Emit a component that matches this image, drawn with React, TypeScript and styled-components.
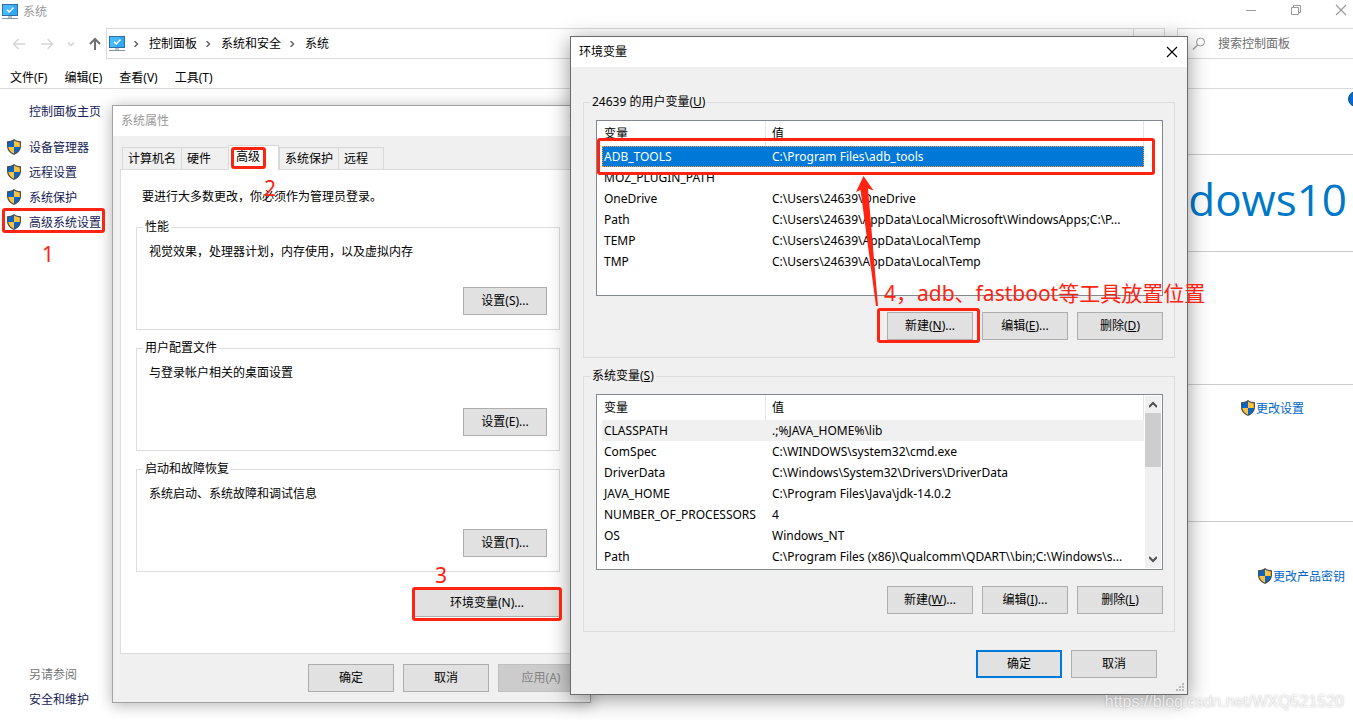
import React from "react";
import styled, { createGlobalStyle, css } from "styled-components";

const FONT = '"Noto Sans", "Noto Sans CJK SC", sans-serif';
const RED = "#ff2312";

const GlobalStyle = createGlobalStyle`
  *, *::before, *::after { box-sizing: border-box; }
  html, body { margin: 0; padding: 0; }
  body { font: 12px/16px ${FONT}; color: #000; background: #fff; overflow: hidden; }
  button, input { font: inherit; color: inherit; margin: 0; }
  svg { display: block; flex: none; }
`;

/* ---------- icons ---------- */

const MonitorIcon = () => (
  <svg width="16" height="16" viewBox="0 0 16 16" aria-hidden="true">
    <rect x="0" y="0" width="16" height="12" fill="#2f6f9f" />
    <rect x="1" y="1" width="14" height="10" fill="#2fa9f8" />
    <path d="M1 1h10L6 11H1z" fill="#47baff" />
    <path d="M5 5.700l2.300 2.300L11.500 3.500" fill="none" stroke="#fff" strokeWidth="1.500" />
    <path d="M6 12h4v2H6z" fill="#b9c4cc" />
    <path d="M0 14.500h16" stroke="#8397a5" />
  </svg>
);

const ShieldIcon = () => (
  <svg width="14" height="16" viewBox="0 0 14 16" aria-hidden="true">
    <path d="M7 0C5 1.600 2.600 2.200 0 2.300V7c0 4.200 2.900 7.300 7 9 4.100-1.700 7-4.800 7-9V2.300C11.400 2.200 9 1.600 7 0z" fill="#4b4f54" />
    <path d="M7 1.500C5.300 2.700 3.200 3.300 1.200 3.400V8H7z" fill="#0a66c4" />
    <path d="M7 1.500c1.700 1.200 3.800 1.800 5.800 1.900V8H7z" fill="#ffc23c" />
    <path d="M1.300 8H7v6.700C3.800 13.200 1.700 11 1.300 8z" fill="#ffc23c" />
    <path d="M12.700 8H7v6.700C10.200 13.200 12.300 11 12.700 8z" fill="#0a66c4" />
  </svg>
);

const ArrowIcon = ({ dir, color }: { dir: "left" | "right" | "up"; color: string }) => {
  const d = {
    left: "M13 7H1.500M6.500 2L1.500 7l5 5",
    right: "M1 7h11.500M7.500 2l5 5-5 5",
    up: "M7 13V2M2 7l5-5 5 5",
  }[dir];
  return (
    <svg width="14" height="14" viewBox="0 0 14 14" aria-hidden="true">
      <path d={d} fill="none" stroke={color} strokeWidth={dir === "up" ? 2 : 1.5} />
    </svg>
  );
};

const Chevron = ({ dir, color, size = 6, w = 1.5 }: { dir: "right" | "down" | "up"; color: string; size?: number; w?: number }) => {
  const d = { right: "M1.500 0l3 3-3 3", down: "M0 1.500l3 3 3-3", up: "M0 4.500l3-3 3 3" }[dir];
  return (
    <svg width={size} height={size} viewBox="0 0 6 6" aria-hidden="true">
      <path d={d} fill="none" stroke={color} strokeWidth={w} />
    </svg>
  );
};

const CloseGlyph = ({ color }: { color: string }) => (
  <svg width="12" height="12" viewBox="0 0 12 12" aria-hidden="true">
    <path d="M1 1l10 10M11 1L1 11" stroke={color} strokeWidth="1.100" />
  </svg>
);

/* ---------- control panel window ---------- */

const Desktop = styled.div`
  position: relative;
  display: flex;
  flex-direction: column;
  min-height: 100vh;
  overflow: hidden;
`;

const TitleBar = styled.header`
  display: flex;
  align-items: center;
  gap: 5px;
  height: 24px;
  padding: 0 6px 0 2px;
  color: #999;
`;

const WindowControls = styled.div`
  display: flex;
  gap: 33px;
  margin-left: auto;
  padding-bottom: 4px;
`;

const IconButton = styled.button`
  display: flex;
  align-items: center;
  justify-content: center;
  min-width: 12px;
  padding: 0;
  border: 0;
  background: none;
`;

const NavRow = styled.nav`
  display: flex;
  align-items: stretch;
  height: 31px;
  margin-top: 4px;
`;

const NavButtons = styled.div`
  display: flex;
  align-items: center;
  gap: 14px;
  width: 106px;
  padding-left: 12px;
`;

const AddressBar = styled.div`
  display: flex;
  flex: 1;
  align-items: center;
  border: 1px solid #d9d9d9;
  padding-left: 2px;
`;

const Crumbs = styled.ol`
  display: flex;
  align-items: center;
  margin: 0;
  padding: 0;
  list-style: none;
`;

const Crumb = styled.li`
  display: flex;
  align-items: center;
  gap: 10px;
  padding-left: 8px;
`;

const AddressDrop = styled.button`
  align-self: stretch;
  width: 31px;
  margin-left: auto;
  border: 0;
  border-left: 1px solid #d9d9d9;
  background: none;
`;

const SearchBox = styled.label`
  display: flex;
  align-items: center;
  gap: 12px;
  width: 176px;
  margin-left: 12px;
  padding-left: 14px;
  border: 1px solid #d9d9d9;
  border-right: 0;
`;

const SearchInput = styled.input`
  width: 100%;
  min-width: 0;
  border: 0;
  padding: 0;
  outline: 0;
  background: none;
  &::placeholder { color: #6d6d6d; opacity: 1; }
`;

const MenuBar = styled.div`
  display: flex;
  align-items: flex-start;
  gap: 17px;
  height: 30px;
  padding: 9px 10px 0;
  border-bottom: 1px solid #d9d9d9;
`;

const MenuItem = styled.button`
  padding: 2px 0;
  border: 0;
  background: none;
`;

const Body = styled.div`
  display: flex;
  flex: 1;
`;

const Sidebar = styled.aside`
  display: flex;
  flex-direction: column;
  width: 180px;
  padding: 14px 0 11px 7px;
`;

const SideList = styled.ul`
  display: flex;
  flex-direction: column;
  gap: 7px;
  margin: 0;
  padding: 0;
  list-style: none;
`;

const SideLink = styled.a<{ $plain?: boolean }>`
  display: flex;
  align-items: flex-start;
  gap: 8px;
  padding-left: ${(p) => (p.$plain ? 22 : 0)}px;
  color: #151c55;
  line-height: 18px;
  text-decoration: none;
`;

const SideHome = styled.div`
  margin-bottom: 18px;
`;

const SeeAlso = styled.div`
  display: flex;
  flex-direction: column;
  gap: 8px;
  margin-top: auto;
`;

const SeeAlsoTitle = styled.span`
  padding-left: 22px;
  color: #777;
`;

const Main = styled.main`
  flex: 1;
`;

const Section = styled.section<{ $h: number; $right: number; $last?: boolean }>`
  display: flex;
  align-items: flex-start;
  justify-content: flex-end;
  height: ${(p) => p.$h}px;
  padding-right: ${(p) => p.$right}px;
  ${(p) => !p.$last && css`border-bottom: 1px solid #ccc;`}
`;

const HelpBadge = styled.button`
  width: 16px;
  height: 16px;
  margin: 2px -11px 0 0;
  border: 1px solid #1b4f80;
  border-radius: 50%;
  padding: 0;
  background: #0069d2;
`;

const Brand = styled.div`
  display: flex;
  padding-top: 12px;
  color: #0078c8;
  font: 400 44px/64px "Open Sans", sans-serif;
`;

const ActionLink = styled.a<{ $top: number }>`
  display: flex;
  align-items: flex-start;
  gap: 1px;
  margin-top: ${(p) => p.$top}px;
  color: #0066cc;
  line-height: 18px;
  text-decoration: none;
`;

/* ---------- shared dialog parts ---------- */

const Dialog = styled.section<{ $x: number; $y: number; $w: number; $active?: boolean }>`
  position: absolute;
  left: ${(p) => p.$x}px;
  top: ${(p) => p.$y}px;
  width: ${(p) => p.$w}px;
  border: 1px solid ${(p) => (p.$active ? "#6b6b6b" : "#a3a3a3")};
  background: #f0f0f0;
  box-shadow: ${(p) => (p.$active ? "0 4px 20px rgba(0,0,0,.42)" : "0 2px 14px rgba(0,0,0,.3)")};
`;

const DialogTitle = styled.header<{ $active?: boolean }>`
  display: flex;
  align-items: center;
  justify-content: space-between;
  height: 30px;
  padding: 0 9px 0 8px;
  background: #fff;
  color: ${(p) => (p.$active ? "#000" : "#999")};
`;

const PushButton = styled.button<{ $w?: number; $primary?: boolean }>`
  width: ${(p) => p.$w ?? 86}px;
  height: 28px;
  padding: 0;
  border: ${(p) => (p.$primary ? "2px solid #0078d7" : "1px solid #adadad")};
  background: #e1e1e1;
  &:disabled { background: #ccc; border-color: #bfbfbf; color: #838383; }
`;

const ButtonRow = styled.div<{ $pad: string }>`
  display: flex;
  justify-content: flex-end;
  gap: 9px;
  padding: ${(p) => p.$pad};
`;

const Group = styled.fieldset<{ $pad: string }>`
  min-width: 0;
  margin: 0 0 10px;
  padding: ${(p) => p.$pad};
  border: 1px solid #dcdcdc;
`;

const Legend = styled.legend`
  margin-left: -6px;
  padding: 0 2px;
`;

/* ---------- system properties ---------- */

const Tabs = styled.div`
  display: flex;
  align-items: flex-end;
  height: 33px;
  padding: 0 9px;
`;

const Tab = styled.button<{ $w: number; $on?: boolean }>`
  width: ${(p) => p.$w}px;
  height: ${(p) => (p.$on ? 25 : 22)}px;
  margin-bottom: ${(p) => (p.$on ? -1 : 0)}px;
  padding: ${(p) => (p.$on ? "0 0 2px 7px" : "0 0 0 5px")};
  border: 1px solid #d9d9d9;
  border-bottom: 0;
  border-right-width: ${(p) => (p.$on ? 1 : 0)}px;
  background: ${(p) => (p.$on ? "#fff" : "#f0f0f0")};
  text-align: left;
  white-space: nowrap;
  &:last-child { border-right-width: 1px; }
`;

const TabPanel = styled.div`
  display: flex;
  flex-direction: column;
  margin: 0 7px;
  padding: 19px 22px 36px 15px;
  border: 1px solid #dcdcdc;
  background: #fff;
`;

const Notice = styled.p`
  margin: 0 0 14px;
  padding-left: 6px;
`;

const GroupBody = styled.div`
  display: flex;
  flex-direction: column;
  gap: 27px;
`;

const EndButton = styled.div`
  display: flex;
  justify-content: flex-end;
`;

const EnvRow = styled(EndButton)`
  padding-top: 7px;
`;

/* ---------- environment variables ---------- */

const EnvBody = styled.div`
  padding: 27px 12px 0;
`;

const ListBox = styled.div`
  display: flex;
  justify-content: space-between;
  height: 176px;
  padding: 0 1px 0 5px;
  border: 1px solid #828790;
  background: #fff;
`;

const VarTable = styled.table`
  width: 542px;
  table-layout: fixed;
  border-collapse: separate;
  border-spacing: 0;
  align-self: flex-start;
`;

const Th = styled.th<{ $w?: number }>`
  width: ${(p) => (p.$w ? p.$w + "px" : "auto")};
  height: 25px;
  padding: 0 0 0 2px;
  border-right: 1px solid #e5e5e5;
  font-weight: 400;
  text-align: left;
  & + & { padding-left: 6px; }
`;

const Td = styled.td`
  height: 21px;
  padding: 0 0 0 2px;
  white-space: nowrap;
  & + & { padding-left: 6px; }
`;

const Row = styled.tr<{ $state?: "selected" | "inactive" }>`
  ${(p) => p.$state === "selected" && css`
    background: #0078d7;
    color: #fff;
    outline: 1px dotted #ff9a3c;
    outline-offset: -1px;
  `}
  ${(p) => p.$state === "inactive" && css`background: #f0f0f0;`}
`;

const ScrollBar = styled.div`
  display: flex;
  flex-direction: column;
  align-items: center;
  width: 16px;
  margin: 1px 0;
  padding: 5px 0;
  background: #f0f0f0;
`;

const ScrollThumb = styled.div`
  width: 100%;
  height: 54px;
  margin: 4px 0 auto;
  background: #cdcdcd;
`;

const Grip = styled.svg`
  position: absolute;
  right: 2px;
  bottom: 2px;
`;

/* ---------- annotations drawn over the windows ---------- */

const Mark = styled.div<{ $x: number; $y: number; $w: number; $h: number }>`
  position: absolute;
  left: ${(p) => p.$x}px;
  top: ${(p) => p.$y}px;
  width: ${(p) => p.$w}px;
  height: ${(p) => p.$h}px;
  border: 3px solid ${RED};
  border-radius: 3px;
  pointer-events: none;
`;

const Note = styled.span<{ $x: number; $y: number }>`
  position: absolute;
  left: ${(p) => p.$x}px;
  top: ${(p) => p.$y}px;
  color: ${RED};
  font-size: 21px;
  line-height: 28px;
  white-space: nowrap;
  pointer-events: none;
`;

const Pointer = styled.svg`
  position: absolute;
  left: 855px;
  top: 175px;
  pointer-events: none;
`;

const Watermark = styled.span`
  position: absolute;
  right: 9px;
  bottom: 8px;
  color: rgba(255, 255, 255, 0.75);
  font: 16px/20px "Liberation Sans", sans-serif;
  text-shadow: 0 0 2px rgba(0, 0, 0, 0.28);
`;

/* ---------- data ---------- */

type Variable = [string, string];

const userVars: Variable[] = [
  ["ADB_TOOLS", "C:\\Program Files\\adb_tools"],
  ["MOZ_PLUGIN_PATH", ""],
  ["OneDrive", "C:\\Users\\24639\\OneDrive"],
  ["Path", "C:\\Users\\24639\\AppData\\Local\\Microsoft\\WindowsApps;C:\\P..."],
  ["TEMP", "C:\\Users\\24639\\AppData\\Local\\Temp"],
  ["TMP", "C:\\Users\\24639\\AppData\\Local\\Temp"],
];

const systemVars: Variable[] = [
  ["CLASSPATH", ".;%JAVA_HOME%\\lib"],
  ["ComSpec", "C:\\WINDOWS\\system32\\cmd.exe"],
  ["DriverData", "C:\\Windows\\System32\\Drivers\\DriverData"],
  ["JAVA_HOME", "C:\\Program Files\\Java\\jdk-14.0.2"],
  ["NUMBER_OF_PROCESSORS", "4"],
  ["OS", "Windows_NT"],
  ["Path", "C:\\Program Files (x86)\\Qualcomm\\QDART\\\\bin;C:\\Windows\\s..."],
];

const settingGroups = [
  { title: "性能", text: "视觉效果，处理器计划，内存使用，以及虚拟内存", key: "S" },
  { title: "用户配置文件", text: "与登录帐户相关的桌面设置", key: "E" },
  { title: "启动和故障恢复", text: "系统启动、系统故障和调试信息", key: "T" },
];

const VariableList = ({ vars, state }: { vars: Variable[]; state: "selected" | "inactive" }) => (
  <VarTable>
    <thead>
      <tr>
        <Th $w={164}>变量</Th>
        <Th>值</Th>
      </tr>
    </thead>
    <tbody>
      {vars.map(([name, value], i) => (
        <Row key={name} $state={i === 0 ? state : undefined}>
          <Td>{name}</Td>
          <Td>{value}</Td>
        </Row>
      ))}
    </tbody>
  </VarTable>
);

const ListActions = ({ keys }: { keys: [string, string, string] }) => (
  <ButtonRow $pad="16px 0 0">
    <PushButton>新建(<u>{keys[0]}</u>)...</PushButton>
    <PushButton>编辑(<u>{keys[1]}</u>)...</PushButton>
    <PushButton>删除(<u>{keys[2]}</u>)</PushButton>
  </ButtonRow>
);

const ControlPanel = () => (
  <>
    <TitleBar>
      <MonitorIcon />
      <span>系统</span>
      <WindowControls>
        <IconButton aria-label="最小化">
          <svg width="12" height="12" viewBox="0 0 12 12"><path d="M1 6.500h10" stroke="#999" /></svg>
        </IconButton>
        <IconButton aria-label="还原">
          <svg width="12" height="12" viewBox="0 0 12 12">
            <path d="M1.500 3.500h7v7h-7zM3.500 3.500v-2h7v7h-2" fill="none" stroke="#999" />
          </svg>
        </IconButton>
        <IconButton aria-label="关闭"><CloseGlyph color="#999" /></IconButton>
      </WindowControls>
    </TitleBar>
    <NavRow>
      <NavButtons>
        <IconButton aria-label="后退"><ArrowIcon dir="left" color="#d6d6d6" /></IconButton>
        <IconButton aria-label="前进"><ArrowIcon dir="right" color="#d6d6d6" /></IconButton>
        <Chevron dir="down" color="#d0d0d0" />
        <IconButton aria-label="上移"><ArrowIcon dir="up" color="#707070" /></IconButton>
      </NavButtons>
      <AddressBar>
        <MonitorIcon />
        <Crumbs>
          {["控制面板", "系统和安全", "系统"].map((c) => (
            <Crumb key={c}>
              <Chevron dir="right" color="#666" />
              <span>{c}</span>
            </Crumb>
          ))}
        </Crumbs>
        <AddressDrop aria-label="历史" />
      </AddressBar>
      <SearchBox>
        <svg width="14" height="14" viewBox="0 0 14 14" aria-hidden="true">
          <circle cx="8.500" cy="5" r="4" fill="none" stroke="#999" />
          <path d="M5.500 8L1 12.500" stroke="#999" strokeWidth="1.200" />
        </svg>
        <SearchInput type="search" placeholder="搜索控制面板" aria-label="搜索控制面板" />
      </SearchBox>
    </NavRow>
    <MenuBar>
      {["文件(F)", "编辑(E)", "查看(V)", "工具(T)"].map((m) => (
        <MenuItem key={m}>{m}</MenuItem>
      ))}
    </MenuBar>
    <Body>
      <Sidebar>
        <SideHome><SideLink href="#home" $plain>控制面板主页</SideLink></SideHome>
        <SideList>
          {["设备管理器", "远程设置", "系统保护", "高级系统设置"].map((t) => (
            <li key={t}>
              <SideLink href="#task"><ShieldIcon />{t}</SideLink>
            </li>
          ))}
        </SideList>
        <SeeAlso>
          <SeeAlsoTitle>另请参阅</SeeAlsoTitle>
          <SideLink href="#security" $plain>安全和维护</SideLink>
        </SeeAlso>
      </Sidebar>
      <Main>
        <Section $h={66} $right={0}><HelpBadge aria-label="帮助" /></Section>
        <Section $h={97} $right={6}>
          <Brand><span>Windows</span><span>10</span></Brand>
        </Section>
        <Section $h={133} $right={8} />
        <Section $h={137} $right={49}>
          <ActionLink href="#settings" $top={15}><ShieldIcon />更改设置</ActionLink>
        </Section>
        <Section $h={100} $right={8} $last>
          <ActionLink href="#key" $top={46}><ShieldIcon />更改产品密钥</ActionLink>
        </Section>
      </Main>
    </Body>
  </>
);

const SystemProperties = () => (
  <Dialog $x={112} $y={105} $w={479} aria-label="系统属性">
    <DialogTitle>
      <span>系统属性</span>
      <IconButton aria-label="关闭"><CloseGlyph color="#999" /></IconButton>
    </DialogTitle>
    <Tabs role="tablist">
      <Tab role="tab" $w={59}>计算机名</Tab>
      <Tab role="tab" $w={47}>硬件</Tab>
      <Tab role="tab" $w={51} $on aria-selected>高级</Tab>
      <Tab role="tab" $w={59}>系统保护</Tab>
      <Tab role="tab" $w={46}>远程</Tab>
    </Tabs>
    <TabPanel role="tabpanel">
      <Notice>要进行大多数更改，你必须作为管理员登录。</Notice>
      {settingGroups.map((g) => (
        <Group key={g.key} $pad="9px 12px 14px">
          <Legend>{g.title}</Legend>
          <GroupBody>
            <span>{g.text}</span>
            <EndButton><PushButton $w={84}>设置({g.key})...</PushButton></EndButton>
          </GroupBody>
        </Group>
      ))}
      <EnvRow><PushButton $w={146}>环境变量(N)...</PushButton></EnvRow>
    </TabPanel>
    <ButtonRow $pad="10px 6px">
      <PushButton>确定</PushButton>
      <PushButton>取消</PushButton>
      <PushButton disabled>应用(A)</PushButton>
    </ButtonRow>
  </Dialog>
);

const EnvironmentVariables = () => (
  <Dialog $x={570} $y={36} $w={618} $active aria-label="环境变量">
    <DialogTitle $active>
      <span>环境变量</span>
      <IconButton aria-label="关闭"><CloseGlyph color="#000" /></IconButton>
    </DialogTitle>
    <EnvBody>
      <Group $pad="10px 11px 17px 12px">
        <Legend>24639 的用户变量(<u>U</u>)</Legend>
        <ListBox><VariableList vars={userVars} state="selected" /></ListBox>
        <ListActions keys={["N", "E", "D"]} />
      </Group>
      <Group $pad="10px 11px 17px 12px">
        <Legend>系统变量(<u>S</u>)</Legend>
        <ListBox>
          <VariableList vars={systemVars} state="inactive" />
          <ScrollBar>
            <Chevron dir="up" color="#505050" size={8} />
            <ScrollThumb />
            <Chevron dir="down" color="#505050" size={8} />
          </ScrollBar>
        </ListBox>
        <ListActions keys={["W", "I", "L"]} />
      </Group>
    </EnvBody>
    <ButtonRow $pad="8px 30px 16px">
      <PushButton $primary>确定</PushButton>
      <PushButton>取消</PushButton>
    </ButtonRow>
    <Grip width="9" height="9" viewBox="0 0 9 9" aria-hidden="true">
      <path d="M6 0h2v2H6zM3 3h2v2H3zM6 3h2v2H6zM0 6h2v2H0zM3 6h2v2H3zM6 6h2v2H6z" fill="#b8b8b8" />
    </Grip>
  </Dialog>
);

export default function App() {
  return (
    <Desktop>
      <GlobalStyle />
      <ControlPanel />
      <SystemProperties />
      <EnvironmentVariables />
      <Mark $x={2} $y={208} $w={103} $h={25} />
      <Note $x={42} $y={240}>1</Note>
      <Mark $x={231} $y={147} $w={35} $h={22} />
      <Note $x={264} $y={174}>2</Note>
      <Mark $x={412} $y={587} $w={150} $h={34} />
      <Note $x={435} $y={561}>3</Note>
      <Mark $x={597} $y={138} $w={558} $h={37} />
      <Mark $x={877} $y={308} $w={103} $h={35} />
      <Pointer width="25" height="134" viewBox="0 0 25 134" aria-hidden="true">
        <path d="M8.500 1L1 17l4.500-2L21 131h2L13 13.500l5.500 2z" fill={RED} />
      </Pointer>
      <Note $x={884} $y={279}>4，adb、fastboot等工具放置位置</Note>
      <Watermark>https://blog.csdn.net/WXQ521520</Watermark>
    </Desktop>
  );
}
